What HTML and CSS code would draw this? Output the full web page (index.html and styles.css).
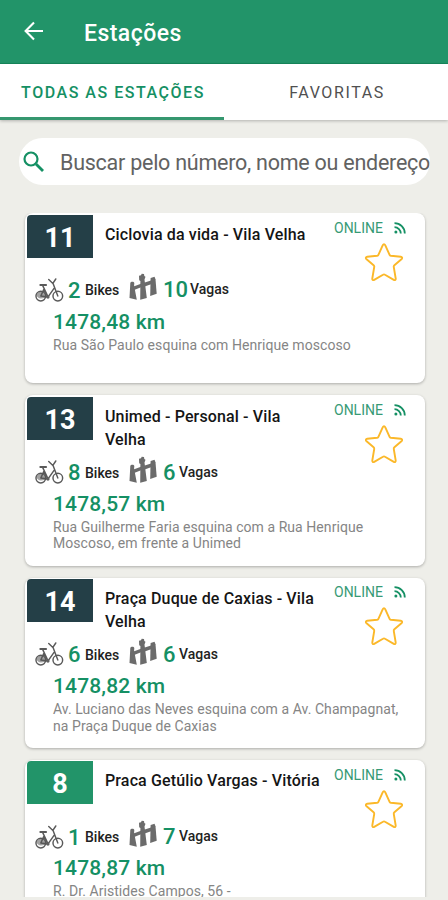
FILE: index.html
```html
<!DOCTYPE html>
<html lang="pt-BR">
<head>
<meta charset="utf-8">
<title>Estações</title>
<link rel="stylesheet" href="styles.css">
</head>
<body>
<svg class="defs" aria-hidden="true">
  <symbol id="bike" viewBox="0 0 30 26">
    <g fill="none" stroke="#5a5a5a" stroke-width="1.5" stroke-linecap="round" stroke-linejoin="round">
      <circle cx="6" cy="19.300" r="5"/><circle cx="23.600" cy="19.300" r="5"/>
      <path d="M6 19.300 9 12.500M8 8.500l5.500 11.600 6-8.600M9.500 13.200l3.600 7M6 19.300l7.500 1M23.600 19.300 18.700 6.200M14.200 2.200l4.300 4 3-4.600"/>
      <path d="M5.500 7.800h6" stroke-width="2"/>
    </g>
    <path d="M1.500 18c1-4 7-5 9.500-1l1 4-6 .8c-2 0-4-1.500-4.500-3.800z" fill="#555" opacity=".55"/>
    <circle cx="13.400" cy="20.300" r="1.700" fill="#606060"/>
  </symbol>
  <symbol id="dock" viewBox="0 0 29 29">
    <g fill="#6b6b6b">
      <path d="M2.300 10c.2-1.600 3.700-1.900 4 0l-.2 2.600L8.800 26.800 1.500 25z"/>
      <path d="m11 2.800 2-.5.700-1.600 2.300.3.300 2 1.200.8-1 2.700L18.800 25l-6.600 1.700L12.400 8l-1.200-.8z"/>
      <path d="m22.600 5 3.900-1.300 1 2.500 1.200 14.600-6.500 2.200z"/>
      <path d="m5.500 13.500 7.500-2.800v3.600l-7.500 3zM16 9.700l7-2.200v3.800l-7 2.400z"/>
    </g>
  </symbol>
  <symbol id="feed" viewBox="0 0 12 12">
    <g fill="none" stroke="#159064" stroke-width="1.800"><path d="M.5 1.200A10.300 10.300 0 0 1 10.800 11.500M.5 5.200A6.300 6.300 0 0 1 6.800 11.500"/></g>
    <circle cx="1.900" cy="10" r="1.500" fill="#159064"/>
  </symbol>
  <symbol id="star" viewBox="0 0 40 40">
    <path d="M20 2.200c.5 0 .9.400 1.200 1l4.400 9.700c.2.500.7.800 1.200.9l10 .9c1.300.1 1.800 1.500.9 2.300l-7.300 6.200c-.6.500-.8 1.100-.6 1.900l1.900 11.400c.2 1.300-.8 2-1.900 1.400L21 32.700c-.6-.4-1.400-.4-2 0L10.200 37.900c-1.100.6-2.100-.1-1.900-1.400l1.900-11.400c.2-.8 0-1.400-.6-1.900L2.300 17c-.9-.8-.4-2.200.9-2.300l10-.9c.5-.1 1-.4 1.200-.9l4.400-9.700c.3-.6.700-1 1.200-1z" fill="none" stroke="#fbb829" stroke-width="1.900" stroke-linejoin="round"/>
  </symbol>
</svg>
<div class="screen">
  <header class="bar">
    <svg class="back" viewBox="0 0 20 20"><path d="M19 10H2M10 1.500 1.600 10l8.400 8.500" fill="none" stroke="#fff" stroke-width="2.100"/></svg>
    <h1>Estações</h1>
  </header>
  <nav class="tabs">
    <div class="tab active"><span>TODAS AS ESTAÇÕES</span></div>
    <div class="tab"><span>FAVORITAS</span></div>
  </nav>
  <div class="search">
    <svg class="lens" viewBox="0 0 22 22"><g fill="none" stroke="#159064"><circle cx="8" cy="8" r="6.500" stroke-width="2.200"/><path d="m13 13 7 7" stroke-width="2.800"/></g></svg>
    <span>Buscar pelo número, nome ou endereço</span>
  </div>
  <main class="list">
    <article class="card">
      <div class="head"><b class="num">11</b><h2>Ciclovia da vida - Vila Velha</h2>
        <div class="side"><div class="status"><span>ONLINE</span><svg><use href="#feed"/></svg></div><svg class="star"><use href="#star"/></svg></div></div>
      <div class="counts"><svg class="bike"><use href="#bike"/></svg><b>2</b><span>Bikes</span><svg class="dock"><use href="#dock"/></svg><b class="free wide">10</b><span>Vagas</span></div>
      <div class="km">1478,48 km</div>
      <p>Rua São Paulo esquina com Henrique moscoso</p>
    </article>
    <article class="card">
      <div class="head"><b class="num">13</b><h2>Unimed - Personal - Vila<br>Velha</h2>
        <div class="side"><div class="status"><span>ONLINE</span><svg><use href="#feed"/></svg></div><svg class="star"><use href="#star"/></svg></div></div>
      <div class="counts"><svg class="bike"><use href="#bike"/></svg><b>8</b><span>Bikes</span><svg class="dock"><use href="#dock"/></svg><b class="free">6</b><span>Vagas</span></div>
      <div class="km">1478,57 km</div>
      <p>Rua Guilherme Faria esquina com a Rua Henrique<br>Moscoso, em frente a Unimed</p>
    </article>
    <article class="card">
      <div class="head"><b class="num">14</b><h2>Praça Duque de Caxias - Vila<br>Velha</h2>
        <div class="side"><div class="status"><span>ONLINE</span><svg><use href="#feed"/></svg></div><svg class="star"><use href="#star"/></svg></div></div>
      <div class="counts"><svg class="bike"><use href="#bike"/></svg><b>6</b><span>Bikes</span><svg class="dock"><use href="#dock"/></svg><b class="free">6</b><span>Vagas</span></div>
      <div class="km">1478,82 km</div>
      <p>Av. Luciano das Neves esquina com a Av. Champagnat,<br>na Praça Duque de Caxias</p>
    </article>
    <article class="card">
      <div class="head"><b class="num open">8</b><h2>Praca Getúlio Vargas - Vitória</h2>
        <div class="side"><div class="status"><span>ONLINE</span><svg><use href="#feed"/></svg></div><svg class="star"><use href="#star"/></svg></div></div>
      <div class="counts"><svg class="bike"><use href="#bike"/></svg><b>1</b><span>Bikes</span><svg class="dock"><use href="#dock"/></svg><b class="free">7</b><span>Vagas</span></div>
      <div class="km">1478,87 km</div>
      <p>R. Dr. Aristides Campos, 56 -</p>
    </article>
  </main>
</div>
</body>
</html>
```
FILE: styles.css
```css
* { box-sizing: border-box; }
body { margin: 0; background: #eeeee9; font-family: Roboto, "Liberation Sans", sans-serif; overflow: hidden; }
svg { display: block; flex: none; }
h1, h2, p { margin: 0; }
.defs { position: absolute; width: 0; height: 0; }
.screen { height: 900px; display: flex; flex-direction: column; overflow: hidden; }
.bar { height: 64px; flex: none; display: flex; align-items: center; padding-left: 24px; background: #229469; border-bottom: 1px solid #16885c; }
.back { width: 20px; height: 20px; margin-top: -1px; }
h1 { margin-left: 40px; padding-top: 3px; color: #fff; font-size: 23px; font-weight: 500; letter-spacing: .45px; }
.tabs { height: 56px; flex: none; display: flex; background: #fff; box-shadow: 0 1px 3px rgba(0,0,0,.25); }
.tab { flex: 1; display: flex; align-items: center; justify-content: center; padding: 4px 0 0 2px; border-bottom: 3px solid transparent; color: #505050; font-size: 16px; letter-spacing: 1.6px; }
.tab.active { border-color: #35976f; color: #159064; font-weight: 500; letter-spacing: 1.53px; }
.search { flex: none; height: 47px; margin: 18px 18px 0 19px; padding-left: 4px; display: flex; align-items: center; overflow: hidden; border-radius: 24px; background: #fff; white-space: nowrap; color: #626262; font-size: 21.500px; letter-spacing: -.25px; }
.search span { padding-top: 2px; }
.lens { width: 22px; height: 22px; margin-right: 15px; }
.list { flex: none; height: 684px; margin-top: 28px; padding: 0 23px 0 25px; display: flex; flex-direction: column; gap: 12px; overflow: hidden; }
.card { flex: none; height: 170.300px; border-radius: 8px; background: #fff; box-shadow: 0 1px 3px rgba(0,0,0,.28); }
.head { height: 59px; display: flex; padding-left: 2px; }
.num { width: 66px; height: 43px; margin-top: 1.500px; border-top-left-radius: 4px; background: #243f47; color: #fff; font-size: 27px; line-height: 47px; text-align: center; font-weight: 700; }
.num.open { background: #229469; }
h2 { flex: 1; margin: 9.500px 0 0 12px; color: #151515; font-size: 16px; line-height: 23px; font-weight: 500; letter-spacing: .14px; white-space: nowrap; }
.side { width: 91px; padding-top: 5.700px; }
.status { display: flex; align-items: center; height: 18px; color: #379a75; font-size: 14px; }
.status span { width: 60px; white-space: nowrap; }
.status svg { width: 12px; height: 12px; }
.star { width: 40px; height: 40px; margin: 5px 0 0 30px; }
.counts { height: 35.500px; display: flex; align-items: center; padding-left: 10px; }
.bike { width: 29px; height: 26px; }
.counts b { width: 21px; padding: 1px 0 0 4px; color: #159064; font-size: 22px; font-weight: 500; }
.counts b.free { width: 22px; padding: 0 0 0 6px; }
.counts b.wide { width: 33px; }
.counts span { padding-top: 1px; width: 34px; color: #222; font-size: 14px; font-weight: 500; }
.counts .free + span { padding-top: 0; margin-top: -1px; }
.dock { width: 29px; height: 29px; margin-left: 9px; margin-top: -4px; }
.km { padding-left: 28px; height: 28px; line-height: 28px; color: #159064; font-size: 21px; font-weight: 500; letter-spacing: .15px; }
p { padding: 1px 0 0 28px; color: #858585; font-size: 14px; line-height: 16.500px; letter-spacing: .06px; white-space: nowrap; }
```
